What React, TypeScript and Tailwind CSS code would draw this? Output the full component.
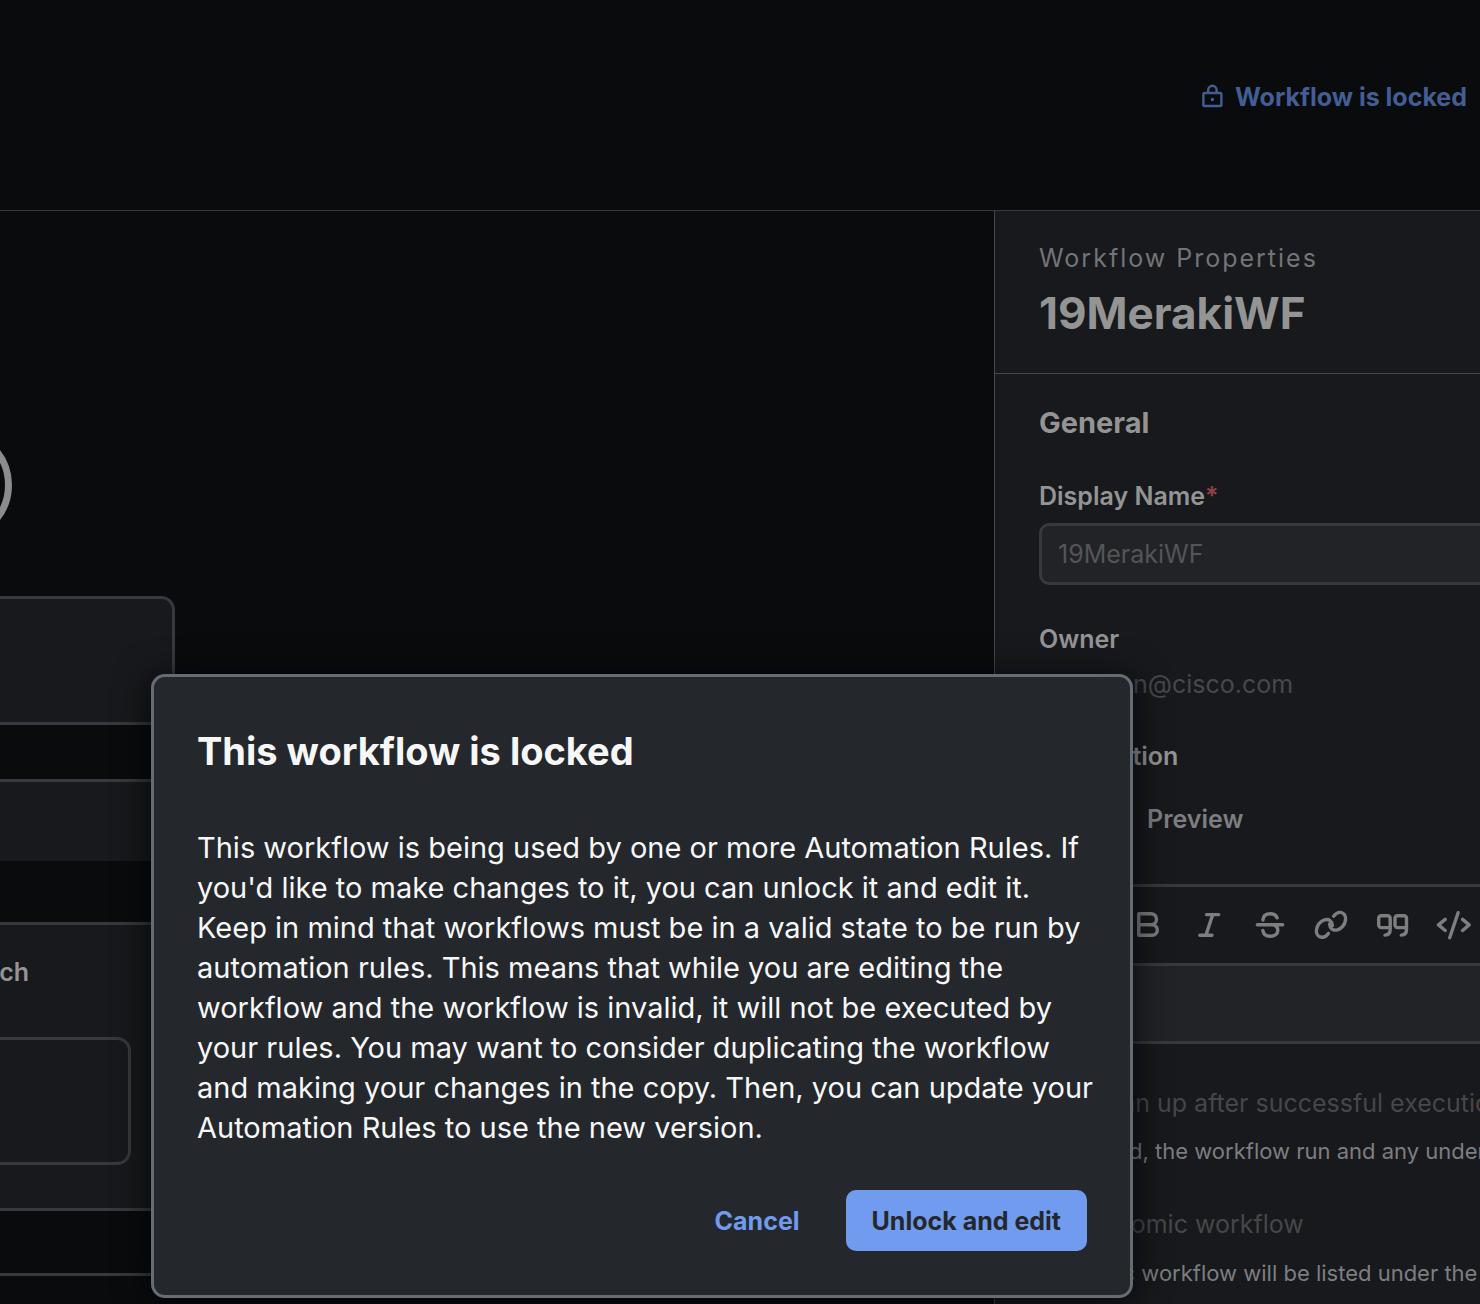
import type { ReactNode } from "react";

function ToolIcon({ label, children }: { label: string; children: ReactNode }) {
  return (
    <button type="button" aria-label={label} className="shrink-0">
      <svg
        viewBox="0 0 36 36"
        className="size-9"
        fill="none"
        stroke="currentColor"
        strokeWidth="3.4"
        strokeLinecap="round"
        strokeLinejoin="round"
      >
        {children}
      </svg>
    </button>
  );
}

function Toolbar() {
  return (
    <div className="flex h-[76px] items-center gap-[25px] pl-[135px] text-[#7d7e80]">
      <ToolIcon label="Bold">
        <path d="M8.7 6.7H21a5.5 5.5 0 0 1 0 11H8.7M21 17.7h1a5.3 5.3 0 0 1 0 10.6H8.7V6.7" />
      </ToolIcon>
      <ToolIcon label="Italic">
        <path d="M15.5 7.6h12.2M8.8 28.2H21M21.7 7.6 14.9 28.2" />
      </ToolIcon>
      <ToolIcon label="Strikethrough">
        <path d="M5.3 17.8h25.4M10.9 13c.3-4 3.2-6.2 7.3-6.2 3.4 0 5.9 1.5 6.9 4M10.9 23.4c.3 3.7 3.2 5.8 7.3 5.8 4.5 0 7.6-2.2 7.6-5.8 0-2.6-1.5-4.6-4-5.6" />
      </ToolIcon>
      <ToolIcon label="Link">
        <path d="M20.6 9.2C23 6 25.5 5.2 27.5 5.4c3.5.4 5.5 3.6 5.1 7.1-.4 4.5-3.6 9-8.1 10.3-4.5 1.2-7.7-1.3-7.9-5.8" />
        <path d="M15.4 26.4c-2.4 3.2-4.9 4-6.9 3.8-3.5-.4-5.5-3.6-5.1-7.1.4-4.5 3.6-9 8.1-10.3 4.5-1.2 7.7 1.3 7.9 5.8" />
      </ToolIcon>
      <ToolIcon label="Quote">
        <path d="M16.2 20.600H7.200a2.500 2.500 0 0 1-2.500-2.500v-6.900a2.500 2.500 0 0 1 2.500-2.500h6.500a2.500 2.500 0 0 1 2.500 2.500v11.300c0 3.500-2 5.500-5.200 5.600" />
        <path d="M32.500 20.600h-9a2.500 2.500 0 0 1-2.500-2.500v-6.900a2.500 2.500 0 0 1 2.500-2.500h6.500a2.500 2.500 0 0 1 2.500 2.500v11.300c0 3.500-2 5.500-5.200 5.600" />
      </ToolIcon>
      <ToolIcon label="Code">
        <path d="m10.200 12.400-6.700 5.500 6.700 5.600M27.600 12.400l6.500 5.500-6.500 5.600M23.100 5.700l-8.400 25" />
      </ToolIcon>
    </div>
  );
}

function Canvas() {
  return (
    <section aria-label="Workflow canvas" className="relative flex-1 overflow-hidden">
      <div className="absolute top-[217px] left-[-102px] size-[114px] rounded-full border-7 border-[#8b8c8e]" />
      <div className="absolute top-[385px] left-[-200px] h-[129px] w-[375px] rounded-[14px] border-3 border-[#37393e] bg-[#17191c]" />
      <div className="absolute top-[568px] left-[-240px] w-[455px] border-3 border-[#37393e]">
        <div className="h-[79px] bg-[#17191c]" />
        <div className="mx-5 mt-[61px] mb-[62px] border-3 border-[#37393e] bg-[#17191c] pt-[31px] pr-[58px] pb-[43px]">
          <p className="w-[243px] text-right text-[25px] leading-8 font-semibold text-[#949494]">ch</p>
          <div className="mt-[49px] h-[128px] w-[345px] rounded-[14px] border-3 border-[#37393e]" />
        </div>
      </div>
    </section>
  );
}

function Properties() {
  return (
    <aside className="w-[486px] shrink-0 overflow-hidden border-l border-[#45474b] bg-[#17191c] text-[#949494]">
      <header className="border-b border-[#45474b] pt-[31px] pb-[34px] pl-11">
        <p className="text-[25px] leading-8 tracking-[2px] text-[#737477]">Workflow Properties</p>
        <h1 className="mt-[13px] text-[44px] leading-[52px] font-bold">19MerakiWF</h1>
      </header>
      <div className="pt-[31px] pl-11 text-[25px] leading-8">
        <h2 className="text-[29px] leading-9 font-bold">General</h2>
        <label htmlFor="display-name" className="mt-[39px] block font-semibold">
          Display Name<span className="text-[#944040]">*</span>
        </label>
        <input
          id="display-name"
          defaultValue="19MerakiWF"
          className="mt-[11px] block h-[62px] w-[520px] rounded-[10px] border-3 border-[#37393e] bg-[#222327] px-4 text-[#535558]"
        />
        <h3 className="mt-[38px] font-semibold">Owner</h3>
        <p className="mt-[13px] pl-[94px] text-[#47484b]">n@cisco.com</p>
        <h3 className="mt-10 font-semibold">Description</h3>
        <div className="mt-[31px] flex gap-9 font-semibold text-[#7d7e80]">
          <button type="button" className="w-[72px] text-left">Write</button>
          <button type="button">Preview</button>
        </div>
      </div>
      <div className="mt-[49px] border-y-3 border-[#37393e]">
        <Toolbar />
        <textarea
          aria-label="Description"
          className="block h-[78px] w-full resize-none border-t-3 border-[#37393e] bg-[#222327]"
        />
      </div>
      <div className="mt-[43px] pl-11 whitespace-nowrap">
        <label className="flex items-center gap-[30px] text-[25px] leading-8 text-[#45474a]">
          <input type="checkbox" className="size-6" />
          Clean up after successful execution
        </label>
        <p className="mt-[18px] text-[22px] leading-7 text-[#7d7e80]">
          If enabled, the workflow run and any underlying
        </p>
        <label className="mt-[43px] flex items-center gap-[43px] text-[25px] leading-8 text-[#45474a]">
          <input type="checkbox" className="size-6" />
          Atomic workflow
        </label>
        <p className="mt-[19px] pl-6 text-[22px] leading-7 text-[#7d7e80]">
          Atomic workflow will be listed under the
        </p>
      </div>
    </aside>
  );
}

function LockedDialog() {
  return (
    <div
      role="dialog"
      aria-modal="true"
      aria-labelledby="locked-title"
      className="absolute top-[674px] left-[151px] w-[982px] rounded-[14px] border-3 border-[#666c73] bg-[#24282c] px-[43px] pt-[50px] pb-11 shadow-[0_4px_36px_rgba(0,0,0,0.8)]"
    >
      <h2 id="locked-title" className="text-[38px] leading-[48px] font-bold text-[#f7f7f7]">
        This workflow is locked
      </h2>
      <p className="mt-[53px] -mr-4 text-[29px] leading-10 text-[#f7f7f7]">
        This workflow is being used by one or more Automation Rules. If you'd like to make changes to it, you can
        unlock it and edit it. Keep in mind that workflows must be in a valid state to be run by automation rules. This
        means that while you are editing the workflow and the workflow is invalid, it will not be executed by your
        rules. You may want to consider duplicating the workflow and making your changes in the copy. Then, you can
        update your Automation Rules to use the new version.
      </p>
      <div className="mt-[42px] flex justify-end gap-[22px] text-[25px] leading-8 font-bold">
        <button type="button" className="px-6 text-[#709bee]">Cancel</button>
        <button type="button" className="h-[61px] rounded-[10px] bg-[#709bee] px-[26px] text-[#24282c]">
          Unlock and edit
        </button>
      </div>
    </div>
  );
}

export default function App() {
  return (
    <div className="relative flex h-screen flex-col overflow-hidden bg-[#090b0d] font-['Inter',sans-serif]">
      <header className="flex h-[211px] shrink-0 items-start justify-end border-b border-[#37393e] pt-[81px] pr-[13px]">
        <button type="button" className="flex items-center gap-[9px] text-[25px] leading-8 font-bold text-[#435e95]">
          <svg viewBox="0 0 26 26" className="size-[26px]" fill="none" stroke="currentColor" strokeWidth="2.4">
            <rect x="3.4" y="9" width="18" height="13" rx="1" />
            <path d="M8.2 9V6a4.200 4.200 0 0 1 8.400 0v3" />
            <circle cx="12.4" cy="15.5" r="1.7" fill="currentColor" stroke="none" />
          </svg>
          Workflow is locked
        </button>
      </header>
      <main className="flex min-h-0 flex-1">
        <Canvas />
        <Properties />
      </main>
      <LockedDialog />
    </div>
  );
}
